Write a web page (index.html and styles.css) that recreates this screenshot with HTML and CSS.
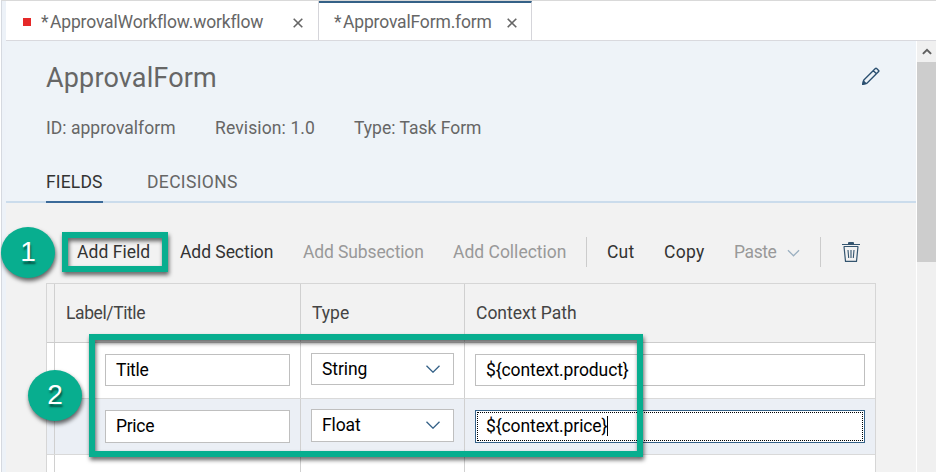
FILE: index.html
```html
<!DOCTYPE html>
<html lang="en">
<head>
<meta charset="utf-8">
<title>ApprovalForm</title>
<link rel="stylesheet" href="styles.css">
</head>
<body>
<div class="app">
  <nav class="tabs">
    <div class="tab tab-workflow">
      <span class="error-mark"></span><span class="star">*</span><span class="tab-name">ApprovalWorkflow.workflow</span>
      <svg class="close" viewBox="0 0 10 10"><path d="M.7.7l8.6 8.6M9.3.7L.7 9.3"/></svg>
    </div>
    <div class="tab tab-form active">
      <span class="star">*</span><span class="tab-name">ApprovalForm.form</span>
      <svg class="close" viewBox="0 0 10 10"><path d="M.7.7l8.6 8.6M9.3.7L.7 9.3"/></svg>
    </div>
  </nav>
  <div class="workspace">
    <main class="editor">
      <header class="form-header">
        <div class="title-row">
          <h1>ApprovalForm</h1>
          <svg class="pencil" viewBox="0 0 18 18"><path d="M.8 17.2l1-4.200L13.400 1.400q.600-.600 1.200 0l2 2q.600.600 0 1.200L5 16.200zM11.200 3.600l3.200 3.200"/><path class="tip" d="M.8 17.2l.7-3 2.300 2.300z"/></svg>
        </div>
        <div class="meta">
          <span class="meta-id">ID: approvalform</span>
          <span class="meta-rev">Revision: 1.0</span>
          <span class="meta-type">Type: Task Form</span>
        </div>
        <div class="sections">
          <span class="section current">FIELDS</span>
          <span class="section">DECISIONS</span>
        </div>
      </header>
      <div class="toolbar">
        <span class="tool add-field">Add Field</span>
        <span class="tool add-section">Add Section</span>
        <span class="tool add-subsection off">Add Subsection</span>
        <span class="tool add-collection off">Add Collection</span>
        <span class="divider"></span>
        <span class="tool cut">Cut</span>
        <span class="tool copy">Copy</span>
        <span class="tool paste off">Paste</span>
        <svg class="chevron small" viewBox="0 0 14 8"><path d="M1 1l6 6 6-6"/></svg>
        <span class="divider second"></span>
        <svg class="trash" viewBox="0 0 18 20"><path d="M0 2.500h18M1.800 4.500h14.400M2 4.500l1.500 14.800h11L16 4.500"/><path class="ribs" d="M6 8l.7 8M9 8v8M12 8l-.7 8"/><path class="lid" d="M6 2.500V1q0-1 1-1h4q1 0 1 1v1.500z"/></svg>
      </div>
      <div class="table">
        <div class="row head">
          <div class="cell"></div>
          <div class="cell h-label">Label/Title</div>
          <div class="cell h-type">Type</div>
          <div class="cell h-path">Context Path</div>
        </div>
        <div class="row">
          <div class="cell"></div>
          <div class="cell c-label"><div class="input">Title</div></div>
          <div class="cell c-type"><div class="input select">String<svg class="chevron" viewBox="0 0 14 8"><path d="M.5.8L7 7.200 13.500.8"/></svg></div></div>
          <div class="cell c-path"><div class="input">${context.product}</div></div>
        </div>
        <div class="row selected">
          <div class="cell"></div>
          <div class="cell c-label"><div class="input">Price</div></div>
          <div class="cell c-type"><div class="input select">Float<svg class="chevron" viewBox="0 0 14 8"><path d="M.5.8L7 7.200 13.500.8"/></svg></div></div>
          <div class="cell c-path"><div class="input focused">${context.price}<span class="caret"></span></div></div>
        </div>
        <div class="row last">
          <div class="cell"></div><div class="cell"></div><div class="cell"></div><div class="cell"></div>
        </div>
      </div>
    </main>
    <div class="scrollbar">
      <div class="scroll-up"><svg viewBox="0 0 10 7"><path d="M.9 5.900L5 1.800l4.100 4.100"/></svg></div>
      <div class="thumb"></div>
    </div>
  </div>
</div>
<div class="frame frame-one"></div>
<div class="frame frame-two"></div>
<div class="badge badge-one">1</div>
<div class="badge badge-two">2</div>
</body>
</html>
```
FILE: styles.css
```css
* { box-sizing: border-box; }
html, body { margin: 0; height: 472px; overflow: hidden; }
body {
  position: relative;
  background: #fff;
  color: #666;
  font: 17.5px/22px Roboto, "Liberation Sans", sans-serif;
  white-space: nowrap;
}
svg { flex: none; fill: none; }
.app {
  height: 472px;
  margin-left: 1px;
  padding-left: 4px;
  border-left: 1px solid #d5d9e0;
  border-top: 1px solid #d9d9d9;
  background: #edf2f8;
}
.tabs {
  display: flex;
  height: 40px;
  background: #fff;
  border-bottom: 1px solid #d9d9de;
}
.tab {
  display: flex;
  align-items: center;
  height: 39px;
  padding-top: 3px;
  border-right: 1px solid #d5d5da;
}
.tab-workflow { width: 313px; padding-left: 17px; }
.tab-form { width: 213px; padding-left: 14px; }
.tab.active { border-top: 2px solid #346187; padding-top: 1px; }
.error-mark { width: 8px; height: 8px; background: #e52929; margin: 0 10px 1px 0; }
.star { width: 9px; margin-left: 1px; }
.tab-name { letter-spacing: -.16px; }
.close { width: 10px; height: 10px; stroke: #666; stroke-width: 1.6; margin-top: 2px; }
.tab-workflow .close { margin-left: 30px; }
.tab-workflow .star { margin-left: 0; }
.tab-form .close { margin-left: 15px; }
.workspace { display: flex; height: 431px; }
.editor { width: 910px; background: #f2f2f2; }
.form-header {
  height: 162px;
  padding: 19px 36px 0 40px;
  background: #eef3f8;
  border-bottom: 2px solid #cbdcec;
}
.title-row { display: flex; justify-content: space-between; height: 36px; }
h1 { margin: 0; font-size: 27px; line-height: 36px; font-weight: 400; letter-spacing: .15px; }
.pencil { width: 18px; height: 18px; margin-top: 7px; stroke: #2b4f70; stroke-width: 1.4; }
.pencil .tip { fill: #2b4f70; }
.meta { display: flex; margin-top: 21px; }
.meta-id { width: 169px; letter-spacing: .03px; }
.meta-rev { width: 139px; letter-spacing: .12px; }
.sections { display: flex; gap: 44px; margin-top: 32px; height: 32px; }
.section { letter-spacing: .35px; }
.section.current { color: #333; height: 32px; width: 57px; border-bottom: 2px solid #3b6a99; letter-spacing: .15px; }
.toolbar { display: flex; align-items: center; height: 80px; padding: 18px 0 0 71px; color: #333; }
.tool { flex: none; }
.add-field { width: 103px; letter-spacing: .05px; }
.add-section { width: 123px; letter-spacing: -.05px; }
.add-subsection { width: 150px; letter-spacing: -.12px; }
.add-collection { width: 133px; }
.off { color: #999; }
.divider { flex: none; width: 1px; height: 30px; background: #ccc; }
.cut { margin-left: 20px; width: 57px; letter-spacing: .2px; }
.copy { width: 70px; letter-spacing: .3px; }
.paste { width: 53px; letter-spacing: -.4px; }
.chevron { width: 14px; height: 8px; stroke: #346187; stroke-width: 1.3; }
.chevron.small { stroke: #9aafc0; width: 13px; margin-top: 2px; }
.second { margin-left: 20px; }
.trash { width: 18px; height: 20px; margin-left: 21px; stroke: #34556f; stroke-width: 1.2; }
.trash .ribs { stroke-width: 1.1; }
.trash .lid { fill: #34556f; stroke: none; }
.table { width: 830px; margin-left: 40px; border: 1px solid #d6d6d6; border-bottom: 0; background: #fff; }
.row {
  display: grid;
  grid-template-columns: 8px 246px 164px 1fr;
  height: 56px;
  border-bottom: 1px solid #d9d9d9;
}
.row.head { height: 59px; background: #f2f2f2; color: #444; line-height: 58px; border-color: #ccc; }
.row.selected { background: #ebeff5; }
.row.last { height: 17px; border-bottom: 0; }
.cell { border-right: 1px solid #d0d0d0; }
.cell:last-child { border-right: 0; }
.h-label { padding-left: 11px; letter-spacing: -.4px; }
.h-type, .h-path { padding-left: 11px; }
.c-label { padding: 11px 10px 0 50px; }
.c-type { padding: 10px 10px 0; }
.c-path { padding: 11px 10px 0; }
.input {
  display: flex;
  align-items: center;
  height: 32px;
  padding: 0 10px;
  border: 1px solid #bfbfbf;
  background: #fff;
  color: #000;
  letter-spacing: -.1px;
}
.selected .input { height: 33px; padding-bottom: 1px; }
.select { justify-content: space-between; }
.input.select { padding-right: 13px; }
.c-label .input { letter-spacing: -.3px; }
.input.focused { border-color: #346187; outline: 1px dotted #000; outline-offset: -3px; }
.caret { width: 1px; height: 20px; background: #000; }
.scrollbar { width: 20px; border-left: 1px solid #fff; background: #f0f0f0; }
.scroll-up { display: flex; align-items: center; justify-content: center; height: 21px; }
.scroll-up svg { width: 10px; height: 7px; stroke: #606060; stroke-width: 2; }
.thumb { height: 200px; background: #cdcdcd; }
.frame { position: absolute; border: 6px solid #08ae8f; filter: drop-shadow(1px 3px 2px rgba(0,0,0,.6)); }
.frame-one { left: 62px; top: 232px; width: 106px; height: 40px; }
.frame-two { left: 89px; top: 334px; width: 554px; height: 123px; }
.badge {
  position: absolute;
  width: 54px;
  height: 51px;
  border-radius: 50%;
  background: #08ae8f;
  color: #fff;
  font: 28px/49px "Liberation Sans", sans-serif;
  text-align: center;
  text-shadow: 1px 3px 2px rgba(0,0,0,.5);
  box-shadow: 1px 3px 4px rgba(0,0,0,.6);
}
.badge-one { left: 1px; top: 227px; }
.badge-two { left: 28px; top: 370px; }
```
